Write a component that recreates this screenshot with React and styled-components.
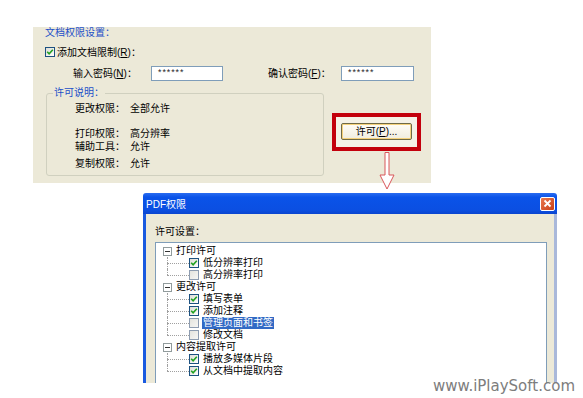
import React from "react";
import styled, { createGlobalStyle } from "styled-components";

const GlobalStyle = createGlobalStyle`
  html, body {
    margin: 0;
    padding: 0;
    background: #fff;
  }
  body {
    font-family: "Liberation Sans", "Noto Sans CJK SC", sans-serif;
  }
`;

const Page = styled.div`
  position: relative;
  width: 583px;
  height: 398px;
  overflow: hidden;
  background: #fff;
  display: flex;
  flex-direction: column;
  align-items: flex-start;
  font-size: 10px;
  color: #000;
`;

/* ---------- top settings panel ---------- */

const TopPanel = styled.div`
  margin: 27px 0 0 33px;
  width: 398px;
  height: 156px;
  box-sizing: border-box;
  padding-left: 12px;
  background: #ece9d8;
  display: flex;
  flex-direction: column;
`;

const PanelTitle = styled.div`
  height: 12px;
  line-height: 12px;
  color: #1c4fc8;
`;

const CheckRow = styled.div`
  margin-top: 7px;
  height: 11px;
  display: flex;
  align-items: center;
  gap: 2px;
`;

const Box = styled.span`
  width: 10px;
  height: 10px;
  box-sizing: border-box;
  flex-shrink: 0;
  border: 1px solid ${(p) => (p.$checked ? "#1c5180" : "#8d9cb0")};
  background: ${(p) =>
    p.$checked
      ? "linear-gradient(135deg, #dcdcd5, #ffffff)"
      : "linear-gradient(135deg, #e4e4de, #f6f6f4)"};
  display: flex;
  align-items: center;
  justify-content: center;
`;

const Check = ({ checked }) => (
  <Box $checked={checked}>
    {checked && (
      <svg width="8" height="8" viewBox="0 0 8 8">
        <path d="M1.2 3.8 L3.1 5.8 L6.8 1.8" fill="none" stroke="#21a121" strokeWidth="1.6" />
      </svg>
    )}
  </Box>
);

const PasswordRow = styled.div`
  margin-top: 9px;
  height: 15px;
  display: flex;
  align-items: center;
`;

const FieldLabel = styled.span`
  margin-left: ${(p) => p.$indent}px;
  width: ${(p) => p.$width}px;
  line-height: 12px;
`;

const PwInput = styled.div`
  width: ${(p) => p.$width}px;
  height: 15px;
  box-sizing: border-box;
  border: 1px solid #7f9db9;
  background: #fff;
  padding-left: 5px;
  font-family: "Liberation Mono", monospace;
  font-size: 9px;
  line-height: 15px;
  letter-spacing: -1px;
  color: #222;
`;

const Lower = styled.div`
  margin-top: 6px;
  display: flex;
  align-items: flex-start;
`;

const InfoBox = styled.fieldset`
  margin: 0 0 0 1px;
  padding: 0;
  width: 278px;
  height: 89px;
  box-sizing: border-box;
  border: 1px solid #d0d0bf;
  border-radius: 3px;
  min-width: 0;
`;

const InfoLegend = styled.legend`
  margin-left: 6px;
  padding: 0 1px;
  line-height: 12px;
  font-size: 10px;
  color: #1c4fc8;
`;

const InfoRow = styled.div`
  margin: ${(p) => p.$top}px 0 0 28px;
  height: 12px;
  line-height: 12px;
  display: flex;
`;

const InfoKey = styled.span`
  width: 55px;
`;

const Highlight = styled.div`
  margin: 26px 0 0 8px;
  width: 89px;
  height: 38px;
  box-sizing: border-box;
  border: 4px solid #c3000c;
  background: #f4f1e6;
  padding: 6px 0 0 5px;
`;

const XpButton = styled.div`
  width: 71px;
  height: 17px;
  box-sizing: border-box;
  border: 1px solid #6f6a45;
  border-radius: 2px;
  box-shadow: inset 0 0 0 1px #f5d27c;
  background: linear-gradient(#fffdf6, #f0eddf);
  display: flex;
  align-items: center;
  justify-content: center;
  line-height: 12px;
`;

/* ---------- dialog ---------- */

const Dialog = styled.div`
  margin: 10px 0 0 143px;
  width: 414px;
  height: 190px;
  display: flex;
  flex-direction: column;
  overflow: hidden;
`;

const TitleBar = styled.div`
  height: 21px;
  flex-shrink: 0;
  box-sizing: border-box;
  padding: 0 2px 0 3px;
  display: flex;
  align-items: center;
  justify-content: space-between;
  background: linear-gradient(#2a6cf0 0%, #0a53e8 20%, #0b4fe2 80%, #0a45cf 100%);
  border-radius: 3px 3px 0 0;
  color: #fff;
  font-size: 10px;
`;

const CloseButton = styled.div`
  width: 15px;
  height: 14px;
  box-sizing: border-box;
  border: 1px solid #fff;
  border-radius: 2px;
  background: linear-gradient(135deg, #e9784f, #c9401a);
  display: flex;
  align-items: center;
  justify-content: center;
`;

const DialogBody = styled.div`
  flex: 1;
  min-height: 0;
  background: #ece9d8;
  border-left: 3px solid #1a5ae0;
  border-right: 3px solid #a9b8da;
  padding: 12px 7px 0 9px;
  display: flex;
  flex-direction: column;
`;

const SectionLabel = styled.div`
  height: 12px;
  line-height: 12px;
`;

const TreeBox = styled.div`
  margin-top: 4px;
  height: 200px;
  flex-shrink: 0;
  box-sizing: border-box;
  border: 1px solid #7f9db9;
  background: #fff;
  padding: 2px 0 0 7px;
`;

const TreeRow = styled.div`
  height: 12px;
  line-height: 12px;
  display: flex;
  align-items: center;
  margin-left: ${(p) => (p.$child ? 4 : 0)}px;
`;

const Expander = styled.span`
  width: 9px;
  height: 9px;
  box-sizing: border-box;
  border: 1px solid #919b9c;
  background: #fff;
  margin-right: 3px;
  display: flex;
  align-items: center;
  justify-content: center;
  &::before {
    content: "";
    width: 5px;
    height: 1px;
    background: #333;
  }
`;

const Connector = styled.span`
  position: relative;
  width: 22px;
  height: 12px;
  flex-shrink: 0;
  &::before {
    content: "";
    position: absolute;
    left: 0;
    top: 0;
    bottom: ${(p) => (p.$last ? 6 : 0)}px;
    border-left: 1px dotted #a0a0a0;
  }
  &::after {
    content: "";
    position: absolute;
    left: 0;
    right: 0;
    top: 6px;
    border-top: 1px dotted #a0a0a0;
  }
`;

const NodeText = styled.span`
  margin-left: ${(p) => (p.$child ? 3 : 0)}px;
  padding: 0 1px;
  background: ${(p) => (p.$selected ? "#316ac5" : "transparent")};
  color: ${(p) => (p.$selected ? "#fff" : "#000")};
`;

/* ---------- overlays ---------- */

const ArrowMark = styled.svg`
  position: absolute;
  left: 378px;
  top: 152px;
`;

const Watermark = styled.div`
  position: absolute;
  right: 8px;
  bottom: 4px;
  font-family: "DejaVu Sans", Verdana, sans-serif;
  font-size: 15px;
  line-height: 15px;
  color: #7d7d7d;
`;

const tree = [
  {
    label: "打印许可",
    items: [
      { label: "低分辨率打印", checked: true },
      { label: "高分辨率打印", checked: false },
    ],
  },
  {
    label: "更改许可",
    items: [
      { label: "填写表单", checked: true },
      { label: "添加注释", checked: true },
      { label: "管理页面和书签", checked: false, selected: true },
      { label: "修改文档", checked: false },
    ],
  },
  {
    label: "内容提取许可",
    items: [
      { label: "播放多媒体片段", checked: true },
      { label: "从文档中提取内容", checked: true },
    ],
  },
];

const info = [
  { key: "更改权限：", value: "全部允许", top: 4 },
  { key: "打印权限：", value: "高分辨率", top: 13 },
  { key: "辅助工具：", value: "允许", top: 1 },
  { key: "复制权限：", value: "允许", top: 5 },
];

export default function App() {
  return (
    <Page>
      <GlobalStyle />

      <TopPanel>
        <PanelTitle>文档权限设置：</PanelTitle>
        <CheckRow>
          <Check checked />
          <span>
            添加文档限制(<u>R</u>)：
          </span>
        </CheckRow>
        <PasswordRow>
          <FieldLabel $indent={28} $width={78}>
            输入密码(<u>N</u>)：
          </FieldLabel>
          <PwInput $width={72}>******</PwInput>
          <FieldLabel $indent={45} $width={73}>
            确认密码(<u>F</u>)：
          </FieldLabel>
          <PwInput $width={73}>******</PwInput>
        </PasswordRow>
        <Lower>
          <InfoBox>
            <InfoLegend>许可说明：</InfoLegend>
            {info.map((row) => (
              <InfoRow key={row.key} $top={row.top}>
                <InfoKey>{row.key}</InfoKey>
                <span>{row.value}</span>
              </InfoRow>
            ))}
          </InfoBox>
          <Highlight>
            <XpButton>
              许可(<u>P</u>)...
            </XpButton>
          </Highlight>
        </Lower>
      </TopPanel>

      <Dialog>
        <TitleBar>
          <span>PDF权限</span>
          <CloseButton>
            <svg width="9" height="9" viewBox="0 0 9 9">
              <path d="M1.5 1.5 L7.5 7.5 M7.5 1.5 L1.5 7.5" stroke="#fff" strokeWidth="1.8" />
            </svg>
          </CloseButton>
        </TitleBar>
        <DialogBody>
          <SectionLabel>许可设置：</SectionLabel>
          <TreeBox>
            {tree.map((group) => (
              <React.Fragment key={group.label}>
                <TreeRow>
                  <Expander />
                  <NodeText>{group.label}</NodeText>
                </TreeRow>
                {group.items.map((item, i) => (
                  <TreeRow key={item.label} $child>
                    <Connector $last={i === group.items.length - 1} />
                    <Check checked={item.checked} />
                    <NodeText $child $selected={item.selected}>
                      {item.label}
                    </NodeText>
                  </TreeRow>
                ))}
              </React.Fragment>
            ))}
          </TreeBox>
        </DialogBody>
      </Dialog>

      <ArrowMark width="18" height="38" viewBox="0 0 18 38">
        <path
          d="M7 0.5 H11 V23 H16 L9 37 L2 23 H7 Z"
          fill="#fff"
          stroke="#d9565a"
          strokeWidth="1"
        />
      </ArrowMark>

      <Watermark>www.iPlaySoft.com</Watermark>
    </Page>
  );
}
